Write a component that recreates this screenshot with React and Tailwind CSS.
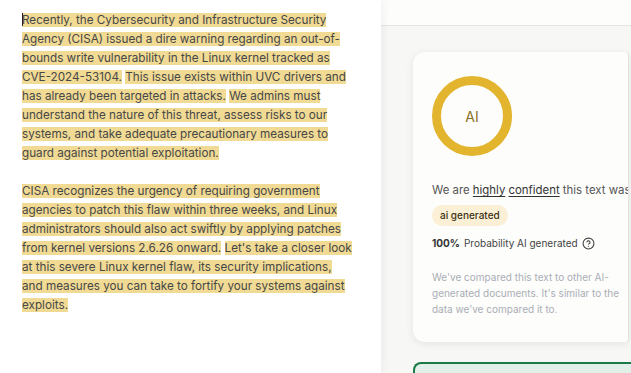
import React from "react";

const para1 = [
  "Recently, the Cybersecurity and Infrastructure Security Agency (CISA) issued a dire warning regarding an out-of-bounds write vulnerability in the Linux kernel tracked as CVE-2024-53104.",
  "This issue exists within UVC drivers and has already been targeted in attacks.",
  "We admins must understand the nature of this threat, assess risks to our systems, and take adequate precautionary measures to guard against potential exploitation.",
];

const para2 = [
  "CISA recognizes the urgency of requiring government agencies to patch this flaw within three weeks, and Linux administrators should also act swiftly by applying patches from kernel versions 2.6.26 onward.",
  "Let's take a closer look at this severe Linux kernel flaw, its security implications, and measures you can take to fortify your systems against exploits.",
];

function Para({ sentences, caret }) {
  return (
    <p className="mb-[19px]">
      {sentences.map((s, i) => (
        <React.Fragment key={i}>
          {i > 0 && " "}
          <span className="bg-[#f0da94]">
            {i === 0 && caret && (
              <span className="inline-block w-px h-[13px] bg-[#222] align-[-2px] -mr-px" />
            )}
            {s}
          </span>
        </React.Fragment>
      ))}
    </p>
  );
}

export default function App() {
  return (
    <div
      className="flex h-[373px] w-[631px] overflow-hidden bg-[#f7f7f5]"
      style={{ fontFamily: "Inter, 'Noto Sans', sans-serif" }}
    >
      <div className="relative z-10 w-[381px] shrink-0 bg-white pl-[22px] pr-[28px] pt-[11px] text-[11.7px] leading-[19px] text-[#474747] shadow-[2px_0_10px_rgba(0,0,0,0.05)]">
        <Para sentences={para1} caret />
        <Para sentences={para2} />
      </div>

      <div className="flex-1 flex flex-col">
        <div className="h-[26px] shrink-0 border-b border-[#e4e4e2] bg-[#fdfdfc]" />
        <div className="pl-[32px] pt-[26px]">
          <div className="w-[216px] h-[290px] overflow-hidden rounded-l-[12px] rounded-r-[4px] border-r border-[#e2e2e0] bg-[#fdfdfc] shadow-[0_2px_8px_rgba(0,0,0,0.08)] pl-[19px] pt-[24px]">
            <div className="flex h-[80px] w-[80px] items-center justify-center rounded-full border-[9px] border-[#e3b52f]">
              <span className="text-[14px] text-[#8d7226]">AI</span>
            </div>
            <p className="mt-[26px] whitespace-nowrap text-[11.4px] leading-[16px] text-[#555]">
              We are{" "}
              <span className="underline decoration-[#333] underline-offset-2 text-[#333]">highly</span>{" "}
              <span className="underline decoration-[#333] underline-offset-2 text-[#333]">confident</span>{" "}
              this text was
            </p>
            <span className="mt-[7px] inline-block rounded-full bg-[#fbf0d6] px-[8px] py-[3px] text-[10px] leading-[15px] font-medium text-[#3d3212]">
              ai generated
            </span>
            <p className="mt-[10px] flex items-center text-[10px] leading-[14px] text-[#444]">
              <span className="font-bold text-[#333]">100%</span>
              <span className="ml-[4px]">Probability AI generated</span>
              <svg className="ml-[4px]" width="13" height="13" viewBox="0 0 24 24" fill="none" stroke="#444" strokeWidth="2" strokeLinecap="round" strokeLinejoin="round">
                <circle cx="12" cy="12" r="10" />
                <path d="M9.1 9a3 3 0 0 1 5.8 1c0 2-3 3-3 3" />
                <path d="M12 17h.01" />
              </svg>
            </p>
            <p className="mt-[19px] w-[190px] text-[10px] leading-[16px] text-[#a9adb4]">
              We've compared this text to other AI-generated documents. It's similar to the data we've compared it to.
            </p>
          </div>
          <div className="mt-[20px] h-[30px] w-[230px] rounded-tl-[8px] border-l-2 border-t-2 border-[#1a7a45] bg-[#e3efe9]" />
        </div>
      </div>
    </div>
  );
}
